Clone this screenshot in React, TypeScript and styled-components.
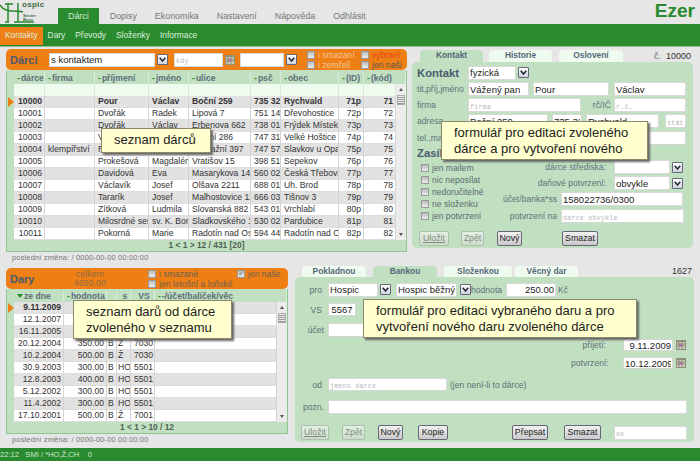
import React from 'react';
import styled, { createGlobalStyle } from 'styled-components';

const Global = createGlobalStyle`
  html, body { margin: 0; padding: 0; background: #e6e6e6; }
  body { font-family: "Liberation Sans", Arial, sans-serif; font-size: 8.6px; color: #222; overflow: hidden; }
  #root { width: 700px; height: 461px; overflow: hidden; }
  * { box-sizing: border-box; }
`;

const GREEN = '#2a8a2f';
const PANEL = '#c1e0c1';
const ORANGE = '#ee7f14';

const Page = styled.div`width: 700px; height: 461px; position: relative; display: flex; flex-direction: column;`;
const Header = styled.header`height: 24px; display: flex; align-items: flex-end; position: relative;`;
const LogoBox = styled.div`width: 58px; height: 24px; flex: none;`;
const TopTab = styled.div<{ $active?: boolean }>`
  height: 16px; padding: 3px ${p => (p.$active ? 10 : 9)}px 0; margin-right: ${p => (p.$active ? 2 : 0)}px; font-size: 8.9px;
  color: ${p => (p.$active ? '#d5ecd5' : '#777')};
  background: ${p => (p.$active ? GREEN : 'transparent')};
`;
const Brand = styled.div`margin-left: auto; margin-right: 5px; margin-bottom: 4px; font-size: 19px; font-weight: bold; color: ${GREEN}; line-height: 18px;`;
const SubNav = styled.nav`height: 23px; background: ${GREEN}; border-bottom: 1px solid #8fc08f; display: flex; padding-top: 3px;`;
const SubItem = styled.div<{ $active?: boolean }>`
  height: 18px; padding: 3px 5px 0; font-size: 8.4px; color: #dcefdc;
  background: ${p => (p.$active ? ORANGE : 'transparent')};
`;
const Section = styled.section<{ $h: number; $mt: number }>`display: flex; height: ${p => p.$h}px; margin-top: ${p => p.$mt}px; padding-left: 6px;`;
const Column = styled.div<{ $w: number; $mt?: number; $ml?: number }>`width: ${p => p.$w}px; flex: none; margin-top: ${p => p.$mt ?? 0}px; margin-left: ${p => p.$ml ?? 0}px;`;
const OrangeBar = styled.div`height: 21px; background: ${ORANGE}; border-radius: 5px; display: flex; align-items: center; padding-left: 4px;`;
const BarTitle = styled.div<{ $w: number }>`width: ${p => p.$w}px; font-size: 11px; font-weight: bold; color: #4b5a6e; flex: none;`;
const BarStack = styled.div<{ $ml: number; $w?: number }>`margin-left: ${p => p.$ml}px; ${p => (p.$w ? `width:${p.$w}px;` : '')} display: flex; flex-direction: column; flex: none;`;
const CheckLine = styled.label<{ $color?: string }>`display: flex; align-items: center; gap: 3px; height: 10px; font-size: 8.6px; white-space: nowrap; color: ${p => p.$color ?? '#5a6a70'};`;
const Box = styled.span<{ $checked?: boolean }>`
  width: 8px; height: 8px; flex: none; border: 1px solid #999; background: linear-gradient(#bbb, #eee); display: inline-flex; align-items: center; justify-content: center; color: #777; font-size: 7px; line-height: 7px;
`;
const Total = styled.div`font-size: 8.6px; line-height: 9px; color: #8d6a45; text-align: center; letter-spacing: 0.2px;`;

const Input = styled.input<{ $w: number; $h?: number; $align?: string; $ml?: number }>`
  width: ${p => p.$w}px; height: ${p => p.$h ?? 14}px; flex: none; margin: 0 0 0 ${p => p.$ml ?? 0}px; padding: 0 1px;
  border: 1px solid #d8d8d8; background: #fff; font-family: "Liberation Sans", Arial, sans-serif; font-size: 9.5px; color: #222; outline: none; text-align: ${p => p.$align ?? 'left'};
  &::placeholder { font-family: "Liberation Mono", monospace; font-size: 6.5px; color: #b5b5b5; letter-spacing: 0.3px; }
`;
const Drop = styled.span<{ $ml?: number }>`
  width: 11px; height: 11px; flex: none; margin-left: ${p => p.$ml ?? 2}px; border: 1px solid #667; background: linear-gradient(#fff, #cdd3dd); display: inline-flex; align-items: center; justify-content: center; border-radius: 1px;
`;
const Chevron = () => (
  <svg width="7" height="5" viewBox="0 0 7 5"><path d="M0.7 0.8 L3.5 4 L6.3 0.8" fill="none" stroke="#223" strokeWidth="1.5" /></svg>
);
const Select = ({ w, value, ml }: { w: number; value?: string; ml?: number }) => (
  <>
    <Input $w={w} $ml={ml} value={value ?? ''} readOnly />
    <Drop><Chevron /></Drop>
  </>
);
const CalWrap = styled.span<{ $ml?: number }>`margin-left: ${p => p.$ml ?? 2}px; display: inline-flex; flex: none;`;
const Calendar = ({ ml }: { ml?: number }) => (
  <CalWrap $ml={ml}>
    <svg width="10" height="10" viewBox="0 0 10 10">
      <rect x="0" y="0" width="10" height="10" fill="#8f8f78" />
      <rect x="1" y="2" width="8" height="7" fill="#d0d0c0" />
      <path d="M1 4H9M1 6H9M3 2V9M6 2V9" stroke="#70705c" strokeWidth="0.7" />
      <rect x="3.5" y="4.5" width="2" height="1.5" fill="#c040d0" />
    </svg>
  </CalWrap>
);

const TableBox = styled.div<{ $top: number }>`border: 1px solid #8fc58f; border-top-width: ${p => p.$top}px; border-top-color: ${PANEL}; background: ${PANEL};`;
const HeadRow = styled.div<{ $cols: string }>`display: grid; grid-template-columns: ${p => p.$cols}; height: 12px; background: ${PANEL};`;
const HeadCell = styled.div<{ $center?: boolean }>`
  font-weight: bold; font-size: 8.6px; color: #5d6e7a; padding-left: 3px; line-height: 12px; white-space: nowrap; overflow: hidden; border-right: 1px solid #d8ecd8;
  text-align: ${p => (p.$center ? 'center' : 'left')};
`;
const Dash = styled.span`color: ${GREEN}; font-weight: bold; margin-right: 1px;`;
const SortMark = styled.span`display: inline-block; width: 0; height: 0; border-left: 3px solid transparent; border-right: 3px solid transparent; border-top: 4px solid ${GREEN}; margin: 0 1px 1px 0;`;
const BodyWrap = styled.div`display: flex;`;
const RowsCol = styled.div`flex: 1; min-width: 0;`;
const FilterRow = styled.div<{ $cols: string }>`display: grid; grid-template-columns: ${p => p.$cols}; height: 12px; background: ${PANEL};`;
const FilterCell = styled.div`background: #eefbee; border-right: 1px solid #d5ead5;`;
const Row = styled.div<{ $cols: string; $bold?: boolean }>`
  display: grid; grid-template-columns: ${p => p.$cols}; height: 12px; line-height: 11px; font-size: 8.6px; color: #333;
  font-weight: ${p => (p.$bold ? 'bold' : 'normal')};
  background: ${PANEL};
`;
const Cell = styled.div<{ $alt: boolean; $right?: boolean; $tight?: boolean }>`
  background: ${p => (p.$alt ? '#e2e2e2' : '#fff')}; border-right: 1px solid #d4d4d4; border-bottom: 1px solid #ddd; padding: 0 ${p => (p.$tight ? '0 0 1px' : '2px 0 3px')}; white-space: nowrap; overflow: hidden;
  text-align: ${p => (p.$right ? 'right' : 'left')};
`;
const Stripe = styled.div`display: flex; align-items: center;`;
const Marker = styled.span`width: 0; height: 0; border-top: 5px solid transparent; border-bottom: 5px solid transparent; border-left: 6px solid ${ORANGE}; margin-left: 1px;`;
const Scroll = styled.div<{ $w: number }>`width: ${p => p.$w}px; flex: none; background: #ececec; display: flex; flex-direction: column; align-items: center; padding: 4px 0; position: relative;`;
const ScrollUp = styled.span`width: 0; height: 0; border-left: 2.5px solid transparent; border-right: 2.5px solid transparent; border-bottom: 3px solid #555;`;
const ScrollDown = styled.span`width: 0; height: 0; border-left: 2.5px solid transparent; border-right: 2.5px solid transparent; border-top: 3px solid #555; margin-top: auto;`;
const Thumb = styled.span`width: 8px; height: 10px; margin-top: 4px; background: repeating-linear-gradient(#eee 0 1px, #999 1px 2px); border: 1px solid #aaa;`;
const Footer = styled.div`height: 11px; line-height: 11px; text-align: center; font-weight: bold; font-size: 8.4px; color: #4f6055;`;
const Note = styled.div`padding: 1px 0 0 6px; font-size: 7.5px; letter-spacing: 0.15px; color: #777; height: 12px;`;

const TabRow = styled.div<{ $pl: number; $h: number }>`display: flex; height: ${p => p.$h}px; padding-left: ${p => p.$pl}px; align-items: flex-end;`;
const Tab = styled.div<{ $w: number; $ml: number; $active?: boolean }>`
  width: ${p => p.$w}px; height: 100%; margin-left: ${p => p.$ml}px; border-radius: 4px 4px 0 0; text-align: center; font-weight: bold; font-size: 8.4px; line-height: 11px; color: #56677a;
  background: ${p => (p.$active ? PANEL : '#eefbee')};
`;
const TabNumber = styled.div`margin-left: auto; padding-right: 2px; font-size: 9px; line-height: 11px; align-self: center; color: #333; white-space: nowrap;`;
const NumberMark = styled.span`color: #5a6a7a; margin-right: 5px;`;
const FormPanel = styled.div<{ $h: number }>`height: ${p => p.$h}px; background: ${PANEL}; border-radius: 5px; position: relative;`;
const FormRow = styled.div<{ $mt: number; $pl?: number; $h?: number; $pt?: number }>`display: flex; align-items: center; height: ${p => p.$h ?? 14}px; margin-top: ${p => p.$mt}px; padding-left: ${p => p.$pl ?? 0}px; padding-top: ${p => p.$pt ?? 0}px;`;
const FormLabel = styled.div<{ $w: number; $right?: boolean; $ml?: number; $pr?: number }>`
  width: ${p => p.$w}px; flex: none; font-size: 8.6px; color: #5f7078; white-space: nowrap; margin-left: ${p => p.$ml ?? 0}px; padding-right: ${p => p.$pr ?? 0}px;
  text-align: ${p => (p.$right ? 'right' : 'left')};
`;
const FormTitle = styled.div<{ $w: number }>`width: ${p => p.$w}px; flex: none; font-size: 11.3px; font-weight: bold; color: #4b5a6e;`;
const SubTitle = styled.div`margin: 2px 0 0 5px; height: 12px; line-height: 12px; font-size: 11.3px; font-weight: bold; color: #4b5a6e;`;
const Split = styled.div`display: flex; margin-top: 1px;`;
const CheckList = styled.div`width: 90px; flex: none; padding: 3px 0 0 9px; display: flex; flex-direction: column; gap: 2px;`;
const FieldList = styled.div`flex: 1;`;
const ButtonRow = styled.div<{ $mt: number }>`display: flex; align-items: center; margin-top: ${p => p.$mt}px;`;
const Button = styled.div<{ $w: number; $ml: number; $off?: boolean; $u?: boolean }>`
  width: ${p => p.$w}px; height: 15px; margin-left: ${p => p.$ml}px; border: 1px solid ${p => (p.$off ? '#aebfae' : '#667')}; border-radius: 2px;
  background: ${p => (p.$off ? 'linear-gradient(#e4efe4,#cddccd)' : 'linear-gradient(#f2f2f2,#c9c9c9)')}; font-size: 8.8px; text-align: center; line-height: 13px; color: ${p => (p.$off ? '#7f8f7f' : '#222')};
  text-decoration: ${p => (p.$u ? 'underline' : 'none')}; flex: none;
`;
const Tip = styled.div<{ $x: number; $y: number; $w: number; $h: number }>`
  position: absolute; left: ${p => p.$x}px; top: ${p => p.$y}px; width: ${p => p.$w}px; height: ${p => p.$h}px;
  background: #ffffcf; border: 1px solid #8a8a6a; box-shadow: 2px 2px 2px #666; font-size: 13px; line-height: 15.5px; color: #222; padding: 3px 0 0 12px; white-space: nowrap; z-index: 5;
`;
const Status = styled.footer`height: 13px; margin-top: auto; background: ${GREEN}; color: #cfe8cf; font-size: 7.6px; line-height: 13px; white-space: pre;`;
const FlexEnd = styled.div`margin-left: auto;`;
const EndSpace = styled.div`width: 8px; flex: none;`;

const dCols = '7px 31px 50px 54px 40px 62px 30px 58px 25px 1fr';
const drCols = '7px 50px 43px 10px 14px 24px 1fr';
const donors = [
  ['10000', '', 'Pour', 'Václav', 'Boční 259', '735 32', 'Rychvald', '71p', '71'],
  ['10001', '', 'Dvořák', 'Radek', 'Lipová 7', '751 14', 'Dřevohostice', '72p', '72'],
  ['10002', '', 'Dvořák', 'Václav', 'Erbenova 662', '738 01', 'Frýdek Místek', '73p', '73'],
  ['10003', '', 'Václavík', 'Jan', 'Hlavní 286', '747 31', 'Velké Hoštice', '74p', '74'],
  ['10004', 'klempířství', 'Rada', 'Petr', 'Nádražní 397', '747 57', 'Slavkov u Opavy', '75p', '75'],
  ['10005', '', 'Prokešová', 'Magdaléna', 'Vratišov 15', '398 51', 'Sepekov', '76p', '76'],
  ['10006', '', 'Davidová', 'Eva', 'Masarykova 140', '560 02', 'Česká Třebová', '77p', '77'],
  ['10007', '', 'Václavík', 'Josef', 'Olšava 2211', '688 01', 'Uh. Brod', '78p', '78'],
  ['10008', '', 'Tararík', 'Josef', 'Malhostovice 11', '666 03', 'Tišnov 3', '79p', '79'],
  ['10009', '', 'Zítková', 'Ludmila', 'Slovanská 882', '543 01', 'Vrchlabí', '80p', '80'],
  ['10010', '', 'Milosrdné sestry', 'sv. K. Bor', 'Sladkovského 1', '530 02', 'Pardubice', '81p', '81'],
  ['10011', '', 'Pokorná', 'Marie', 'Radotín nad Os', '594 44', 'Radotín nad Os', '82p', '82'],
];
const gifts = [
  ['9.11.2009', '250.00', 'B', 'Ž', '5567', ''],
  ['12.1.2007', '500.00', 'B', 'Ž', '7030', ''],
  ['16.11.2005', '500.00', 'B', 'Ž', '7030', ''],
  ['20.12.2004', '350.00', 'B', 'Ž', '7030', ''],
  ['10.2.2004', '500.00', 'B', 'Ž', '7030', ''],
  ['30.9.2003', '300.00', 'B', 'HO', '5501', ''],
  ['12.8.2003', '400.00', 'B', 'HO', '5501', ''],
  ['5.12.2002', '300.00', 'B', 'HO', '5501', ''],
  ['11.4.2002', '300.00', 'B', 'HO', '5501', ''],
  ['17.10.2001', '500.00', 'B', 'Ž', '7001', ''],
];
const dHeads = ['dárce', 'firma', 'příjmení', 'jméno', 'ulice', 'psč', 'obec', '(ID)', '(kód)'];

const Logo = () => (
  <svg width="58" height="24" viewBox="0 0 58 24">
    <path d="M0 5 C3 10 7 11 12 11 C16 11 20 11 23 12 M8 3 V22 M18 3 V22 M5 4 H13 M5 22 H9 M14 22 H34" fill="none" stroke={GREEN} strokeWidth="1.5" />
    <text x="22" y="6.5" fontFamily="Liberation Sans" fontWeight="bold" fontSize="8" letterSpacing="0.3" fill="#3f6b3f">ospic</text>
    <text x="23" y="16.5" fontFamily="Liberation Sans" fontWeight="bold" fontSize="4.2" fill="#3f6b3f">Sester</text>
    <text x="23" y="20.5" fontFamily="Liberation Sans" fontWeight="bold" fontSize="4.2" fill="#3f6b3f">Boro</text>
  </svg>
);

export default function App() {
  return (
    <Page>
      <Global />
      <Header>
        <LogoBox><Logo /></LogoBox>
        <TopTab $active>Dárci</TopTab>
        <TopTab>Dopisy</TopTab>
        <TopTab>Ekonomika</TopTab>
        <TopTab>Nastavení</TopTab>
        <TopTab>Nápověda</TopTab>
        <TopTab>Odhlásit</TopTab>
        <Brand>Ezer</Brand>
      </Header>
      <SubNav>
        <SubItem $active>Kontakty</SubItem>
        <SubItem>Dary</SubItem>
        <SubItem>Převody</SubItem>
        <SubItem>Složenky</SubItem>
        <SubItem>Informace</SubItem>
      </SubNav>

      <Section $h={217} $mt={2}>
        <Column $w={401}>
          <OrangeBar>
            <BarTitle $w={39}>Dárci</BarTitle>
            <Select w={106} value="s kontaktem" />
            <Input $w={49} $ml={6} placeholder="kdy" />
            <Calendar />
            <Select w={44} ml={5} />
            <BarStack $ml={10} $w={54}>
              <CheckLine $color="#f6c79a"><Box />i smazaní</CheckLine>
              <CheckLine $color="#f6c79a"><Box />i zemřelí</CheckLine>
            </BarStack>
            <BarStack $ml={0}>
              <CheckLine $color="#e8451a"><Box />vybraní</CheckLine>
              <CheckLine $color="#5a5a50"><Box />jen naši</CheckLine>
            </BarStack>
          </OrangeBar>
          <TableBox $top={2}>
            <HeadRow $cols={dCols}>
              <div />
              {dHeads.map(h => <HeadCell key={h}><Dash>-</Dash>{h}</HeadCell>)}
            </HeadRow>
            <BodyWrap>
              <RowsCol>
                <FilterRow $cols={dCols}>
                  <div />
                  {dHeads.map(h => <FilterCell key={h} />)}
                </FilterRow>
                {donors.map((d, i) => (
                  <Row key={d[0]} $cols={dCols} $bold={i === 0}>
                    <Stripe>{i === 0 && <Marker />}</Stripe>
                    {d.map((c, j) => <Cell key={j} $alt={i % 2 === 0} $right={j === 0 || j >= 7}>{c}</Cell>)}
                  </Row>
                ))}
              </RowsCol>
              <Scroll $w={10}><ScrollUp /><Thumb /><ScrollDown /></Scroll>
            </BodyWrap>
            <Footer>1 &lt; 1 &gt; 12 / 431 [20]</Footer>
          </TableBox>
          <Note>poslední změna: / 0000-00-00 00:00:00</Note>
        </Column>
        <Column $w={281} $mt={1} $ml={5}>
          <TabRow $pl={8} $h={12}>
            <Tab $w={63} $ml={0} $active>Kontakt</Tab>
            <Tab $w={63} $ml={6}>Historie</Tab>
            <Tab $w={64} $ml={7}>Oslovení</Tab>
            <TabNumber><NumberMark>č.</NumberMark>10000</TabNumber>
          </TabRow>
          <FormPanel $h={186}>
            <FormRow $mt={0} $pl={5} $h={17} $pt={4}>
              <FormTitle $w={51}>Kontakt</FormTitle>
              <Select w={48} value="fyzická" />
            </FormRow>
            <FormRow $mt={3} $pl={5}>
              <FormLabel $w={51}>tit,příj,jméno</FormLabel>
              <Input $w={61} value="Vážený pan" readOnly />
              <Input $w={76} $ml={4} value="Pour" readOnly />
              <Input $w={72} $ml={5} value="Václav" readOnly />
            </FormRow>
            <FormRow $mt={2} $pl={5}>
              <FormLabel $w={51}>firma</FormLabel>
              <Input $w={113} placeholder="firma" />
              <FormLabel $w={33} $right $pr={3}>rč/IČ</FormLabel>
              <Input $w={72} placeholder="r.č." />
            </FormRow>
            <FormRow $mt={2} $pl={5}>
              <FormLabel $w={51}>adresa</FormLabel>
              <Input $w={80} value="Boční 259" readOnly />
              <Input $w={30} $ml={4} value="735 32" readOnly />
              <Input $w={73} $ml={4} value="Rychvald" readOnly />
              <Input $w={21} $ml={6} placeholder="stát" />
            </FormRow>
            <FormRow $mt={3} $pl={5}>
              <FormLabel $w={51}>tel.,mail</FormLabel>
              <Input $w={218} />
            </FormRow>
            <SubTitle>Zasílání</SubTitle>
            <Split>
              <CheckList>
                <CheckLine><Box />jen mailem</CheckLine>
                <CheckLine><Box />nic neposílat</CheckLine>
                <CheckLine><Box />nedoručitelné</CheckLine>
                <CheckLine><Box />ne složenku</CheckLine>
                <CheckLine><Box />jen potvrzení</CheckLine>
              </CheckList>
              <FieldList>
                <FormRow $mt={0}>
                  <FormLabel $w={112} $right $pr={8}>dárce střediska:</FormLabel>
                  <Select w={56} />
                </FormRow>
                <FormRow $mt={2}>
                  <FormLabel $w={112} $right $pr={8}>daňové potvrzení:</FormLabel>
                  <Select w={56} value="obvykle" />
                </FormRow>
                <FormRow $mt={2}>
                  <FormLabel $w={59} $right $pr={4}>účet/banka*ss</FormLabel>
                  <Input $w={122} value="158022736/0300" readOnly />
                </FormRow>
                <FormRow $mt={3}>
                  <FormLabel $w={59} $right $pr={4}>potvrzení na</FormLabel>
                  <Input $w={123} placeholder="dárce obvykle" />
                </FormRow>
              </FieldList>
            </Split>
            <ButtonRow $mt={8}>
              <Button $w={30} $ml={7} $off $u>Uložit</Button>
              <Button $w={23} $ml={12} $off>Zpět</Button>
              <Button $w={25} $ml={13}>Nový</Button>
              <Button $w={36} $ml={40}>Smazat</Button>
            </ButtonRow>
          </FormPanel>
        </Column>
      </Section>

      <Section $h={182} $mt={0}>
        <Column $w={282} $mt={2}>
          <OrangeBar>
            <BarTitle $w={50}>Dary</BarTitle>
            <BarStack $ml={0} $w={60}>
              <Total>celkem</Total>
              <Total>4650.00</Total>
            </BarStack>
            <BarStack $ml={28} $w={89}>
              <CheckLine $color="#6f5f50"><Box />i smazané</CheckLine>
              <CheckLine $color="#6f5f50"><Box />jen letošní a loňské</CheckLine>
            </BarStack>
            <BarStack $ml={0}>
              <CheckLine $color="#6f5f50"><Box $checked>✓</Box>jen naše</CheckLine>
              <CheckLine />
            </BarStack>
          </OrangeBar>
          <TableBox $top={1}>
            <HeadRow $cols={drCols}>
              <div />
              <HeadCell><SortMark />ze dne</HeadCell>
              <HeadCell><Dash>-</Dash>hodnota</HeadCell>
              <HeadCell />
              <HeadCell $center>s</HeadCell>
              <HeadCell $center>VS</HeadCell>
              <HeadCell><Dash>-</Dash>-/účet/balíček/věc</HeadCell>
            </HeadRow>
            <BodyWrap>
              <RowsCol>
                {gifts.map((g, i) => (
                  <Row key={g[0]} $cols={drCols} $bold={i === 0}>
                    <Stripe>{i === 0 && <Marker />}</Stripe>
                    {g.map((c, j) => <Cell key={j} $alt={i % 2 === 0} $right={j < 2} $tight={j === 2 || j === 3}>{c}</Cell>)}
                  </Row>
                ))}
              </RowsCol>
              <Scroll $w={10}><ScrollUp /><Thumb /><ScrollDown /></Scroll>
            </BodyWrap>
            <Footer>1 &lt; 1 &gt; 10 / 12</Footer>
          </TableBox>
          <Note>poslední změna: / 0000-00-00 00:00:00</Note>
        </Column>
        <Column $w={399} $ml={7}>
          <TabRow $pl={7} $h={11}>
            <Tab $w={64} $ml={0}>Pokladnou</Tab>
            <Tab $w={64} $ml={7} $active>Bankou</Tab>
            <Tab $w={68} $ml={7}>Složenkou</Tab>
            <Tab $w={63} $ml={3}>Věcný dar</Tab>
            <TabNumber>1627</TabNumber>
          </TabRow>
          <FormPanel $h={165}>
            <FormRow $mt={0} $h={19} $pt={6}>
              <FormLabel $w={33} $right $pr={6}>pro</FormLabel>
              <Select w={50} value="Hospic" />
              <Input $w={61} $ml={5} value="Hospic běžný" readOnly />
              <Drop $ml={3}><Chevron /></Drop>
              <FormLabel $w={35}>hodnota</FormLabel>
              <Input $w={50} $align="right" value="250.00" readOnly />
              <FormLabel $w={14} $ml={2}>Kč</FormLabel>
            </FormRow>
            <FormRow $mt={7} $h={13}>
              <FormLabel $w={33} $right $pr={6}>VS</FormLabel>
              <Input $w={28} $h={13} $align="center" value="5567" readOnly />
            </FormRow>
            <FormRow $mt={7} $h={14}>
              <FormLabel $w={33} $right $pr={4}>účet</FormLabel>
              <Input $w={72} />
            </FormRow>
            <FormRow $mt={2} $h={12}>
              <FlexEnd />
              <FormLabel $w={52} $right $pr={17}>přijetí:</FormLabel>
              <Input $w={50} $h={12} $align="right" value="9.11.2009" readOnly />
              <Calendar ml={3} />
              <EndSpace />
            </FormRow>
            <FormRow $mt={6} $h={12}>
              <FlexEnd />
              <FormLabel $w={52} $right $pr={17}>potvrzení:</FormLabel>
              <Input $w={50} $h={12} $align="right" value="10.12.2009" readOnly />
              <Calendar ml={3} />
              <EndSpace />
            </FormRow>
            <FormRow $mt={9} $h={13}>
              <FormLabel $w={33} $right $pr={6}>od</FormLabel>
              <Input $w={119} $h={13} placeholder="jméno dárce" />
              <FormLabel $w={100} $ml={3}>(jen není-li to dárce)</FormLabel>
            </FormRow>
            <FormRow $mt={9} $h={14}>
              <FormLabel $w={33} $right $pr={4}>pozn.</FormLabel>
              <Input $w={359} />
            </FormRow>
            <ButtonRow $mt={11}>
              <Button $w={28} $ml={6} $off $u>Uložit</Button>
              <Button $w={23} $ml={13} $off>Zpět</Button>
              <Button $w={25} $ml={13}>Nový</Button>
              <Button $w={30} $ml={15}>Kopie</Button>
              <Button $w={36} $ml={64}>Přepsat</Button>
              <Button $w={37} $ml={16}>Smazat</Button>
              <Input $w={73} $ml={13} placeholder="ok" />
            </ButtonRow>
          </FormPanel>
        </Column>
      </Section>

      <Status>22:12   SMI / *HO,Ž,CH    0</Status>

      <Tip $x={101} $y={128} $w={110} $h={25}>seznam dárců</Tip>
      <Tip $x={441} $y={121} $w={207} $h={39}>formulář pro editaci zvoleného<br />dárce a pro vytvoření nového</Tip>
      <Tip $x={73} $y={300} $w={159} $h={39}>seznam darů od dárce<br />zvoleného v seznamu</Tip>
      <Tip $x={363} $y={299} $w={274} $h={39}>formulář pro editaci vybraného daru a pro<br />vytvoření nového daru zvoleného dárce</Tip>
    </Page>
  );
}
